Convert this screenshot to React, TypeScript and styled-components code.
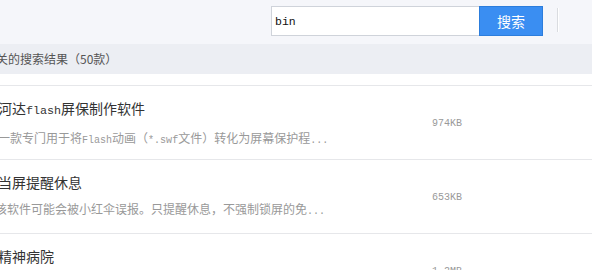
import React from "react";
import styled, { createGlobalStyle } from "styled-components";

const GlobalStyle = createGlobalStyle`
  html, body { margin: 0; padding: 0; background: #ffffff; }
  body { font-family: "Noto Sans CJK SC", "Noto Sans", sans-serif; overflow: hidden; }
  * { box-sizing: border-box; }
`;

const Page = styled.div`
  width: 592px;
  overflow: hidden;
`;

const Header = styled.header`
  height: 44px;
  background: #f5f6fa;
  display: flex;
  align-items: flex-start;
  padding-top: 6px;
`;

const SearchBox = styled.div`
  margin-left: auto;
  display: flex;
  height: 30px;
`;

const SearchInput = styled.div`
  width: 208px;
  height: 30px;
  background: #ffffff;
  border: 1px solid #cfd3da;
  border-right: none;
  padding-left: 3px;
  display: flex;
  align-items: center;
  font-family: "Liberation Mono", monospace;
  font-size: 11.5px;
  color: #111;
`;

const SearchButton = styled.button`
  width: 64px;
  height: 30px;
  margin: 0;
  padding: 0;
  background: #3a8ef2;
  border: 1px solid #2c7ddc;
  color: #ffffff;
  font-family: "Noto Sans CJK SC", sans-serif;
  font-size: 14px;
  line-height: 28px;
`;

const Divider = styled.div`
  width: 2px;
  height: 24px;
  margin: 2px 33px 0 14px;
  border-left: 1px solid #dadce0;
  border-right: 1px solid #ffffff;
`;

const SummaryBar = styled.div`
  height: 30px;
  background: #eceef3;
  font-size: 12px;
  line-height: 30px;
  color: #555;
  white-space: nowrap;
`;

const Offset = styled.span`
  display: inline-block;
  margin-left: -16px;
`;

const Gap = styled.div`
  height: 12px;
  border-bottom: 1px solid #e6e7ea;
`;

const Item = styled.div`
  height: 74px;
  border-bottom: 1px solid #e6e7ea;
  display: grid;
  grid-template-columns: 432px auto;
  padding: 12px 0 0;
  white-space: nowrap;
`;

const TextCol = styled.div`
  margin-left: -2px;
  display: flex;
  flex-direction: column;
  gap: 7px;
  overflow: visible;
`;

const Title = styled.div`
  font-size: 14px;
  line-height: 20px;
  color: #333;
`;

const Desc = styled.div<{ $shift?: number }>`
  font-size: 12px;
  line-height: 20px;
  color: #999;
  margin-left: ${(p) => p.$shift ?? 0}px;
`;

const Latin = styled.span`
  font-family: "Liberation Mono", monospace;
  font-size: 0.835em;
`;

const Size = styled.div`
  margin-top: 16px;
  font-family: "Liberation Mono", monospace;
  font-size: 10px;
  line-height: 20px;
  color: #999;
  height: 20px;
`;

type Part = string | { latin: string };

const renderParts = (parts: Part[]) =>
  parts.map((p, i) =>
    typeof p === "string" ? <React.Fragment key={i}>{p}</React.Fragment> : <Latin key={i}>{p.latin}</Latin>
  );

const items: { title: Part[]; desc: Part[]; size: string; shift?: number }[] = [
  {
    title: ["河达", { latin: "flash" }, "屏保制作软件"],
    desc: ["一款专门用于将", { latin: "Flash" }, "动画（", { latin: "*.swf" }, "文件）转化为屏幕保护程", { latin: "..." }],
    size: "974KB",
  },
  {
    title: ["当屏提醒休息"],
    desc: ["该软件可能会被小红伞误报。只提醒休息，不强制锁屏的免", { latin: "..." }],
    size: "653KB",
    shift: -3,
  },
  {
    title: ["精神病院"],
    desc: [""],
    size: "1.2MB",
  },
];

export default function App() {
  return (
    <Page>
      <GlobalStyle />
      <Header>
        <SearchBox>
          <SearchInput>bin</SearchInput>
          <SearchButton>搜索</SearchButton>
        </SearchBox>
        <Divider />
      </Header>
      <SummaryBar>
        <Offset>相关的搜索结果（50款）</Offset>
      </SummaryBar>
      <Gap />
      {items.map((it, i) => (
        <Item key={i}>
          <TextCol>
            <Title>{renderParts(it.title)}</Title>
            <Desc $shift={it.shift}>{renderParts(it.desc)}</Desc>
          </TextCol>
          <Size>{it.size}</Size>
        </Item>
      ))}
    </Page>
  );
}
